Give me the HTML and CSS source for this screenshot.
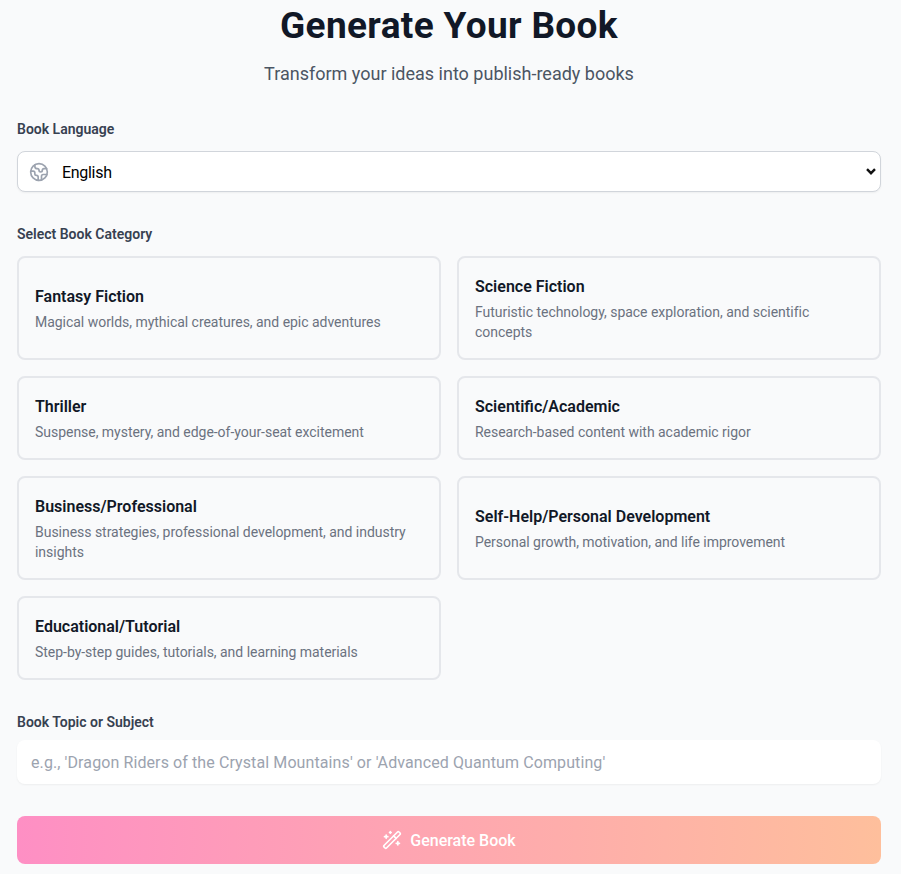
FILE: index.html
```html
<!DOCTYPE html>
<html>
<head>
    <meta charset="utf-8">
    <meta name="viewport" content="width=device-width, initial-scale=1">
    <title>Generate Your Book</title>
    <link rel="stylesheet" href="styles.css">
</head>
<body>
    <div class="page">
        <div class="header">
            <h1>Generate Your Book</h1>
            <p>Transform your ideas into publish-ready books</p>
        </div>

        <div class="field language">
            <label class="label" for="language">Book Language</label>
            <div class="select-wrap">
                <svg class="globe" width="20" height="20" viewBox="0 0 24 24" fill="none" stroke="currentColor" stroke-width="2" stroke-linecap="round" stroke-linejoin="round">
                    <circle cx="12" cy="12" r="10"/>
                    <path d="M21.54 15H17a2 2 0 0 0-2 2v4.54"/>
                    <path d="M7 3.34V5a3 3 0 0 0 3 3a2 2 0 0 1 2 2c0 1.1.9 2 2 2a2 2 0 0 0 2-2c0-1.1.9-2 2-2h3.17"/>
                    <path d="M11 21.95V18a2 2 0 0 0-2-2a2 2 0 0 1-2-2v-1a2 2 0 0 0-2-2H2.05"/>
                </svg>
                <select id="language">
                    <option>English</option>
                    <option>Spanish</option>
                    <option>French</option>
                </select>
                <svg class="chevron" width="10" height="7" viewBox="0 0 10 7" fill="none" stroke="currentColor" stroke-width="2.4">
                    <path d="M1 1.2 5 5.2 9 1.2"/>
                </svg>
            </div>
        </div>

        <div class="field categories">
            <div class="label">Select Book Category</div>
            <div class="grid">
                <div class="card">
                    <h3>Fantasy Fiction</h3>
                    <p>Magical worlds, mythical creatures, and epic adventures</p>
                </div>
                <div class="card">
                    <h3>Science Fiction</h3>
                    <p>Futuristic technology, space exploration, and scientific concepts</p>
                </div>
                <div class="card">
                    <h3>Thriller</h3>
                    <p>Suspense, mystery, and edge-of-your-seat excitement</p>
                </div>
                <div class="card">
                    <h3>Scientific/Academic</h3>
                    <p>Research-based content with academic rigor</p>
                </div>
                <div class="card">
                    <h3>Business/Professional</h3>
                    <p>Business strategies, professional development, and industry insights</p>
                </div>
                <div class="card">
                    <h3>Self-Help/Personal Development</h3>
                    <p>Personal growth, motivation, and life improvement</p>
                </div>
                <div class="card">
                    <h3>Educational/Tutorial</h3>
                    <p>Step-by-step guides, tutorials, and learning materials</p>
                </div>
            </div>
        </div>

        <div class="field topic">
            <label class="label" for="topic">Book Topic or Subject</label>
            <input id="topic" type="text" placeholder="e.g., 'Dragon Riders of the Crystal Mountains' or 'Advanced Quantum Computing'">
        </div>

        <button class="generate">
            <svg width="20" height="20" viewBox="0 0 24 24" fill="none" stroke="currentColor" stroke-width="2" stroke-linecap="round" stroke-linejoin="round">
                <path d="m21.64 3.64-1.28-1.28a1.21 1.21 0 0 0-1.72 0L2.36 18.64a1.21 1.21 0 0 0 0 1.72l1.28 1.28a1.2 1.2 0 0 0 1.72 0L21.64 5.36a1.2 1.2 0 0 0 0-1.72"/>
                <path d="m14 7 3 3"/>
                <path d="M5 6v4"/>
                <path d="M19 14v4"/>
                <path d="M10 2v2"/>
                <path d="M7 8H3"/>
                <path d="M21 16h-4"/>
                <path d="M11 3H9"/>
            </svg>
            Generate Book
        </button>
    </div>
</body>
</html>
```

FILE: styles.css
```css
* {
    margin: 0;
    padding: 0;
    box-sizing: border-box;
    font-family: Roboto, "Noto Sans", sans-serif;
}
body {
    background: #f9fafb;
    color: #111827;
}
.page {
    padding: 0 20px 10px 17px;
}
.header {
    text-align: center;
}
.header h1 {
    font-size: 37px;
    line-height: 52px;
    letter-spacing: 0.35px;
    font-weight: 700;
    color: #111827;
}
.header p {
    font-size: 18px;
    line-height: 28px;
    margin-top: 8px;
    color: #4b5563;
}
.field {
    display: flex;
    flex-direction: column;
}
.label {
    font-size: 14px;
    line-height: 20px;
    font-weight: 600;
    color: #374151;
    margin-bottom: 12px;
}
.language {
    margin-top: 31px;
}
.select-wrap {
    position: relative;
}
.globe {
    position: absolute;
    left: 12px;
    top: 11px;
    color: #9ca3af;
}
.chevron {
    position: absolute;
    right: 5px;
    top: 17px;
    color: #111;
    pointer-events: none;
}
select {
    display: block;
    width: 100%;
    height: 41px;
    padding: 2px 0 0 44px;
    font-size: 16px;
    letter-spacing: -0.3px;
    color: #000;
    background: #fff;
    border: 1px solid #d1d5db;
    border-radius: 8px;
    box-shadow: 0 1px 2px rgba(0, 0, 0, 0.05);
    appearance: none;
}
.categories {
    margin-top: 32px;
}
.grid {
    display: grid;
    grid-template-columns: 1fr 1fr;
    gap: 16px;
}
.card {
    display: flex;
    flex-direction: column;
    justify-content: center;
    padding: 16px;
    border: 2px solid #e5e7eb;
    border-radius: 8px;
}
.card h3 {
    font-size: 16px;
    line-height: 24px;
    font-weight: 600;
    margin-top: 1px;
    color: #111827;
}
.card p {
    font-size: 14px;
    line-height: 20px;
    letter-spacing: -0.03px;
    margin-top: 3px;
    color: #6b7280;
}
.topic {
    margin-top: 32px;
}
.topic .label {
    margin-bottom: 8px;
}
.topic input {
    height: 44px;
    padding: 0 14px;
    font-size: 16px;
    letter-spacing: 0.1px;
    background: #fff;
    border: 0;
    outline: 0;
    border-radius: 8px;
    box-shadow: 0 1px 2px rgba(0, 0, 0, 0.05);
}
.topic input::placeholder {
    color: #9ca3af;
}
.generate {
    display: flex;
    align-items: center;
    justify-content: center;
    gap: 8px;
    width: 100%;
    height: 48px;
    margin-top: 32px;
    font-size: 16px;
    font-weight: 500;
    color: #fff;
    border: 0;
    border-radius: 8px;
    background: linear-gradient(90deg, #fe8fc4, #febf9c);
}
```
